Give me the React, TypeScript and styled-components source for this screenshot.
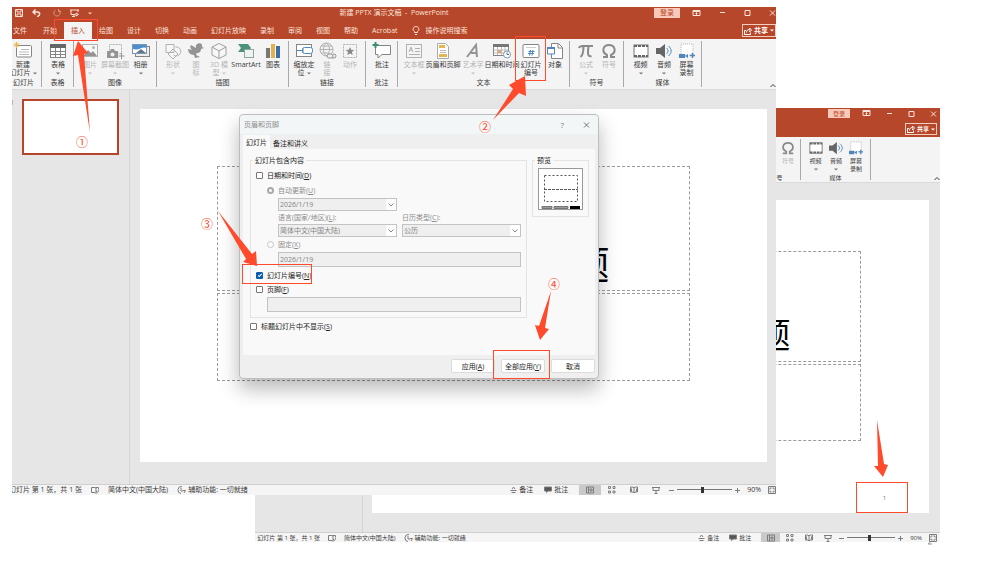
import React, { ReactNode } from "react";
import styled, { createGlobalStyle, css, ThemeProvider } from "styled-components";

/* ---------- theme ---------- */

const colors = {
  brand: "#b7472a",
  brandText: "#fbe3da",
  ribbon: "#f4f4f4",
  desk: "#e6e6e6",
  line: "#c8c8c8",
  ink: "#3a3a3a",
  faint: "#b4b4b4",
  mark: "#ff4a2c",
};

const regular = {
  font: 7, bar: 12, tabs: 20, ribbon: 51, icon: 16, line: 8, labelRow: 9,
  pane: 118, padTop: 19, padRight: 9, padBottom: 22, padLeft: 10,
  status: 11, title: 39, controls: 18, share: 13, signIn: 26, slider: 55, active: 22, gap: 11,
  edge: 0, count: 70, statusGap: 9,
};

const compact = {
  font: 6, bar: 11, tabs: 18, ribbon: 46, icon: 14, line: 8, labelRow: 11,
  pane: 108, padTop: 17, padRight: 11, padBottom: 19, padLeft: 9,
  status: 10, title: 35, controls: 15, share: 12, signIn: 22, slider: 48, active: 19, gap: 10,
  edge: 3, count: 65, statusGap: 8,
};

type Sizes = typeof regular;
type T = { theme: any };
const s = (key: keyof Sizes) => ({ theme }: T) => `${theme[key]}px`;

const GlobalStyle = createGlobalStyle`
  *, *::before, *::after { box-sizing: border-box; }
  body { margin: 0; background: #fff; }
  body, button, input, select {
    font-family: "Open Sans", "Noto Sans CJK SC", sans-serif;
  }
  button, fieldset, legend { margin: 0; padding: 0; border: 0; background: none; color: inherit; }
  svg { display: block; flex: none; }
`;

/* ---------- window frame ---------- */

const Stage = styled.main`
  display: grid;
  align-items: start;
  padding-bottom: 21px;
`;

const Window = styled.section<{ $back?: boolean }>`
  grid-area: 1 / 1;
  position: relative;
  isolation: isolate;
  overflow: hidden;
  min-width: 0;
  margin: ${(p) => (p.$back ? "108px 63px 0 255px" : "7px 227px 0 12px")};
  font-size: ${s("font")};
  line-height: ${s("line")};
  color: ${colors.ink};
  white-space: nowrap;
`;

const ResizeCorner = styled.svg`
  grid-area: 1 / 1;
  place-self: end;
  margin: 0 70px -3px 0;
`;

const Header = styled.header`
  background: ${colors.brand};
  color: ${colors.brandText};
`;

const TitleBar = styled.div`
  display: grid;
  grid-template-columns: 1fr auto 1fr;
  align-items: center;
  height: ${s("bar")};
`;

const QuickAccess = styled.div`
  display: flex;
  align-items: center;
  gap: 9px;
  padding-left: 3px;
`;

const BareButton = styled.button<{ $dim?: boolean }>`
  display: flex;
  align-items: center;
  opacity: ${(p) => (p.$dim ? 0.5 : 1)};
`;

const WindowControls = styled.div`
  display: flex;
  align-items: center;
  justify-content: flex-end;
  gap: 12px;
  grid-column: 3;
  padding-right: ${s("edge")};
`;

const FrameButtons = styled.div`
  display: flex;
  align-items: center;
  gap: ${s("controls")};
`;

const SignIn = styled.button`
  width: ${s("signIn")};
  height: ${s("bar")};
  border-top: 1px solid ${colors.brand};
  border-bottom: 1px solid ${colors.brand};
  background: #f8c9b9;
  color: ${colors.brand};
  font-size: ${s("font")};
  line-height: ${s("line")};
`;

const TabRow = styled.nav`
  display: flex;
  align-items: flex-end;
  height: ${s("tabs")};
`;

const TabButton = styled.button<{ $active?: boolean; $first?: boolean }>`
  display: flex;
  align-items: center;
  gap: 6px;
  height: 17px;
  padding: 0 ${(p) => (p.$first ? 9 : 7)}px 0 ${(p) => (p.$first ? 1 : 7)}px;
  font-size: ${s("font")};
  line-height: ${s("line")};
  ${(p) => p.$active && css`
    background: ${colors.ribbon};
    color: ${colors.brand};
  `}
`;

const Share = styled.button`
  display: flex;
  align-items: center;
  gap: 2px;
  height: ${s("share")};
  margin: 0 ${s("edge")} 2px auto;
  padding: 0 1px;
  border: 1px solid #f3cdc0;
  color: #fff;
  font-size: ${s("font")};
  line-height: ${s("line")};
  font-weight: 600;
`;

/* ---------- ribbon ---------- */

const RibbonBar = styled.div<{ $end?: boolean }>`
  position: relative;
  display: flex;
  justify-content: ${(p) => (p.$end ? "flex-end" : "flex-start")};
  height: ${s("ribbon")};
  padding: 2px ${(p) => (p.$end ? 69 : 0)}px 2px 0;
  background: ${colors.ribbon};
  border-bottom: 1px solid #dadada;
`;

const Group = styled.div<{ $width: number; $flush?: boolean }>`
  display: flex;
  flex: none;
  flex-direction: column;
  justify-content: space-between;
  width: ${(p) => p.$width}px;
  padding: 0 ${(p) => (p.$flush ? "6px 0 0" : "3px")};
  border-right: 1px solid #a9a9a9;
`;

const Tools = styled.div`
  display: flex;
  padding-top: 2px;
`;

const Tool = styled.button<{ $width: number; $off?: boolean }>`
  display: flex;
  flex: none;
  flex-direction: column;
  align-items: center;
  width: ${(p) => p.$width}px;
  color: ${(p) => (p.$off ? colors.faint : colors.ink)};
  font-size: ${s("font")};
  line-height: ${s("line")};
`;

const ToolIcon = styled.span<{ $off?: boolean }>`
  display: block;
  margin-bottom: 2px;
  opacity: ${(p) => (p.$off ? 0.6 : 1)};
  svg { width: ${s("icon")}; height: ${s("icon")}; overflow: visible; }
`;

const ToolLine = styled.span`
  display: flex;
  align-items: center;
  gap: 2px;
  min-height: ${s("line")};
`;

const GroupLabel = styled.div`
  height: ${s("labelRow")};
  line-height: ${s("labelRow")};
  display: flex;
  justify-content: center;
`;

const CollapseCaret = styled.button`
  position: absolute;
  right: 0;
  bottom: 1px;
`;

/* ---------- work area ---------- */

const WorkArea = styled.div`
  display: grid;
  grid-template-columns: ${({ theme }: T) => theme.pane}px minmax(0, 1fr);
  background: ${colors.desk};
`;

const ThumbPane = styled.aside`
  display: flex;
  align-items: flex-start;
  gap: 8px;
  padding: 9px 10px 0 0;
  border-right: 1px solid #d4d4d4;
  color: ${colors.brand};
`;

const ThumbNumber = styled.span`
  width: 2px;
  direction: rtl;
`;

const Thumb = styled.div`
  flex: 1;
  aspect-ratio: 97 / 56;
  border: 2px solid #b5452b;
  background: #fff;
`;

const Canvas = styled.div`
  padding: ${({ theme }: T) =>
    `${theme.padTop}px ${theme.padRight}px ${theme.padBottom}px ${theme.padLeft}px`};
`;

const Slide = styled.article`
  position: relative;
  display: grid;
  grid-template-columns: 77fr minmax(0, 473fr) 77fr;
  grid-template-rows: 57fr minmax(0, 125fr) 2fr 87fr minmax(0, 81fr);
  aspect-ratio: 16 / 9;
  background: #fff;
`;

const Placeholder = styled.div<{ $row: number }>`
  grid-column: 2;
  grid-row: ${(p) => p.$row};
  display: flex;
  align-items: flex-end;
  justify-content: center;
  min-width: 0;
  padding-bottom: 5px;
  border: 1px dashed #9b9b9b;
  color: #000;
  font-family: "Noto Sans CJK SC", sans-serif;
  font-size: ${s("title")};
  line-height: 46px;
`;

const SlideNumber = styled.div`
  position: relative;
  grid-column: 1 / -1;
  grid-row: 5;
  place-self: end;
  display: grid;
  place-items: center;
  width: 52px;
  height: 31px;
  margin-right: 21px;
  padding-left: 5px;
  border: 1px solid ${colors.mark};
  color: #777;
  font-size: 6px;
`;

const NumberArrow = styled.svg`
  position: absolute;
  left: 17px;
  bottom: 35px;
`;

/* ---------- status bar ---------- */

const Status = styled.footer`
  display: flex;
  align-items: center;
  gap: ${s("statusGap")};
  height: ${s("status")};
  padding-right: ${s("edge")};
  border-top: 1px solid #cfcfcf;
  background: #f5f5f5;
  svg { color: #7c7c7c; }
`;

const SlideCount = styled.span`
  display: flex;
  justify-content: flex-end;
  width: ${s("count")};
`;

const StatusButton = styled.button`
  display: flex;
  align-items: center;
  gap: 2px;
  font-size: ${s("font")};
  line-height: ${s("line")};
`;

const StatusRight = styled.div`
  display: flex;
  align-items: center;
  gap: ${s("gap")};
  height: 100%;
  margin-left: auto;
`;

const ViewAndZoom = styled.div`
  display: flex;
  align-items: center;
  gap: 2px;
  height: 100%;
`;

const ViewButtons = styled.div`
  display: flex;
  height: 100%;
`;

const ViewButton = styled.button<{ $active?: boolean }>`
  display: grid;
  place-items: center;
  width: ${s("active")};
  background: ${(p) => (p.$active ? "#c9c9c9" : "transparent")};
`;

const ZoomBox = styled.div`
  display: flex;
  align-items: center;
  gap: 3px;
`;

const ZoomSlider = styled.input`
  appearance: none;
  width: ${s("slider")};
  height: 7px;
  margin: 0;
  background: linear-gradient(#777, #777) center / 100% 1px no-repeat;
  &::-webkit-slider-thumb {
    appearance: none;
    width: 3px;
    height: 6px;
    background: #333;
  }
`;

const ZoomValue = styled.span`
  margin: 0 4px;
`;

/* ---------- dialog ---------- */

const DialogBox = styled.div`
  position: absolute;
  z-index: 2;
  top: 5px;
  left: 99px;
  width: 360px;
  border: 1px solid #bdbdbd;
  border-radius: 4px;
  background: #efefef;
  box-shadow: 0 10px 20px rgba(0, 0, 0, 0.28);
  color: #222;
  font-size: 7px;
  line-height: 9px;
`;

const DialogTitle = styled.div`
  display: flex;
  align-items: center;
  height: 19px;
  padding: 0 8px 0 4px;
  border-radius: 4px 4px 0 0;
  background: #f3f6f7;
  color: #8b8b8b;
`;

const DialogTitleButtons = styled.div`
  display: flex;
  align-items: center;
  gap: 19px;
  margin-left: auto;
  button { font-size: 8px; color: #777; }
`;

const DialogTabs = styled.div`
  display: flex;
  align-items: flex-end;
  height: 15px;
  padding: 0 3px;
`;

const DialogTab = styled.button<{ $active?: boolean }>`
  height: ${(p) => (p.$active ? 14 : 12)}px;
  padding: 0 3px;
  background: ${(p) => (p.$active ? "#f9f9f9" : "transparent")};
  font-size: 7px;
  line-height: 9px;
`;

const DialogPage = styled.div`
  margin: 0 3px;
  padding: 7px 6px 22px 7px;
  background: #f9f9f9;
`;

const Columns = styled.div`
  display: grid;
  grid-template-columns: minmax(0, 1fr) 57px;
  align-items: start;
  gap: 5px;
  margin-bottom: 1px;
`;

const Fieldset = styled.fieldset`
  min-width: 0;
  padding: 3px 5px 4px;
  border: 1px solid #e4e4e4;
`;

const Legend = styled.legend`
  margin-left: -3px;
  padding: 0 2px;
`;

const Option = styled.label<{ $indent?: boolean; $off?: boolean }>`
  display: flex;
  align-items: center;
  gap: 4px;
  height: 14px;
  margin-left: ${(p) => (p.$indent ? 11 : 0)}px;
  color: ${(p) => (p.$off ? "#8c8c8c" : "#222")};
`;

const Check = styled.input`
  appearance: none;
  display: grid;
  place-items: center;
  width: 7px;
  height: 7px;
  margin: 0;
  border: 1px solid #777;
  border-radius: ${(p) => (p.type === "radio" ? "50%" : "1px")};
  background: #fdfdfd;
  &[type="radio"] { border-color: #c4c4c4; }
  &[type="radio"]:checked { border: 2px solid #a9a9a9; }
  &[type="checkbox"]:checked {
    border-color: #0a5cad;
    background: #0a5cad;
  }
  &[type="checkbox"]:checked::after {
    content: "";
    width: 4px;
    height: 2px;
    border: solid #fff;
    border-width: 0 0 1px 1px;
    transform: rotate(-45deg);
  }
`;

const DateGrid = styled.div`
  display: grid;
  grid-template-columns: 1fr 1fr;
  column-gap: 5px;
  margin: 1px 0 0 22px;
  color: #8c8c8c;
`;

const Combo = styled.div`
  position: relative;
  svg { position: absolute; right: 3px; top: 5px; pointer-events: none; }
`;

const fieldLook = css`
  display: block;
  width: 100%;
  height: 13px;
  margin: 0;
  padding: 0 1px;
  border: 1px solid #c3c3c3;
  border-radius: 0;
  color: #858585;
  font-size: 7px;
  line-height: 11px;
  opacity: 1;
`;

const Select = styled.select`
  appearance: none;
  ${fieldLook}
  background: linear-gradient(#fdfdfd, #fdfdfd) right / 10px 100% no-repeat #efefef;
`;

const FieldLabel = styled.label`
  height: 13px;
  line-height: 13px;
`;

const TextField = styled.input`
  ${fieldLook}
  height: 15px;
  background: #efefef;
`;

const Indent = styled.div<{ $by: number }>`
  margin: 1px 0 1px ${(p) => p.$by}px;
`;

const Preview = styled.div`
  display: grid;
  place-items: center;
  padding-bottom: 2px;
`;

const DialogFooter = styled.div`
  display: flex;
  justify-content: flex-end;
  gap: 6px;
  padding: 4px 3px 5px;
`;

const PushButton = styled.button`
  width: 44px;
  height: 14px;
  border: 1px solid #dcdcdc;
  border-radius: 2px;
  background: #fff;
  font-size: 7px;
  line-height: 9px;
`;

/* ---------- annotations ---------- */

const MarkLayer = styled.svg`
  position: absolute;
  z-index: 5;
  top: 0;
  left: 0;
  pointer-events: none;
`;

const StepNumber = styled.span<{ $x: number; $y: number }>`
  position: absolute;
  z-index: 5;
  left: ${(p) => p.$x - 6}px;
  top: ${(p) => p.$y - 6}px;
  width: 12px;
  color: ${colors.mark};
  font-family: "Noto Sans CJK SC", sans-serif;
  font-size: 12px;
  line-height: 12px;
`;

/* ---------- icons ---------- */

const G = "#858585";
const B = "#4f86bd";

const art: Record<string, ReactNode> = {
  newSlide: <><rect x="1.500" y="2.500" width="15" height="11.500" rx="1" fill="#fff" stroke={G} /><path d="M6 6.500h8M4 9h10M4 11.500h10" stroke="#bbb" /><path d="M1.500-1v6M-1.500 2h6M-.5 0l4 4M3.500 0l-4 4" stroke="#eeb24a" /></>,
  table: <><rect x=".5" y="1.500" width="15" height="13" fill="#fff" stroke={G} /><path d="M0 1h16v4H0z" fill="#666" /><path d="M0 8.500h16M0 11.500h16M5.500 5v10M10.500 5v10" stroke={G} /></>,
  picture: <><rect x=".5" y="1.500" width="15" height="12" fill="#fafafa" stroke={G} /><path d="m1 13 5-6 3 3 2-2 4 5z" fill="#555" /><circle cx="11.500" cy="4.500" r="1.500" fill="#888" /></>,
  screenshot: <><rect x="2.500" y="1.500" width="12" height="9" fill="none" stroke={G} strokeDasharray="2 1" /><path d="M0 8h3l1-2h3l1 2h3v7H0z" fill="#555" /><circle cx="5.500" cy="11.500" r="2" fill="#eee" /><path d="M14.500 10v6M11.500 13h6" stroke="#555" /></>,
  album: <><rect x="2.500" y="3.500" width="14" height="10" fill="#eee" stroke={G} /><rect x="-.5" y="1.500" width="14" height="9" fill="#fff" stroke="#7a98b3" /><path d="M0 2h13v3C9 3 6 8 0 6z" fill="#4b8fca" /><path d="m3 10 5-4 5 4z" fill="#678" /></>,
  shapes: <path d="M1 1.500h8v8H1zM10.500 4a4.500 4.500 0 1 1-2 8M8 6l5 5-5 5-5-5z" fill="#fafafa" stroke={G} />,
  icons: <path d="M8 2c3-3 7-2 6 2l2 1-3 1c0 3-2 4-4 4l-1 2 4 2-5 1-1-3C2 12 0 9 0 6l4 1C2 5 2 3 3 2l5 3z" fill="#555" />,
  model: <path d="M8 .5 15 4v8l-7 3.500L1 12V4zM1 4l7 4 7-4M8 8v7.500" fill="#fafafa" stroke="#666" />,
  smartart: <><path d="M0 1h10l3 4-3 4H0l3-4z" fill="#4d927d" /><rect x="6.500" y="6.500" width="9" height="8" fill="#eef2f0" stroke="#8fa69d" /></>,
  chart: <><path d="M1 5h4v10H1z" fill="#777" /><path d="M6 1h4v14H6z" fill="#e3b04e" /><path d="M11 3h4v12h-4z" fill="#3b6ea8" /></>,
  zoomLink: <><rect x=".5" y="1.500" width="15" height="12" fill="#fff" stroke={G} /><rect x="6.500" y="4.500" width="10" height="6" rx="2" fill="#fff" stroke={B} /><path d="M1 7.500h6M7 5.500v4" stroke={B} /></>,
  link: <><path d="M7.500 0a6.500 6.500 0 1 1 0 13 6.500 6.500 0 0 1 0-13M1 6.500h13M7.500 0c-4 4-4 9 0 13M7.500 0c4 4 4 9 0 13M2 3h11M2 10h8" fill="none" stroke={G} /><path d="M10 11h2a2 2 0 0 1 0 4h-2a2 2 0 0 1 0-4M14 11h1a2 2 0 0 1 0 4h-2" fill="#eee" stroke="#555" /></>,
  action: <><rect x="1.500" y="1.500" width="13" height="13" fill="none" stroke={G} strokeDasharray="2 1" /><path d="m8 4 1.200 2.800 3 .2-2.300 2 .8 3L8 10.400 5.300 12l.8-3-2.300-2 3-.2z" fill="#444" /></>,
  comment: <><path d="M1.500 2.500h15v9H8l-4 3.500v-3.500H1.500z" fill="#fff" stroke={G} /><path d="M1.500-1v6M-1.500 2h6" stroke="#3c8f6d" strokeWidth="2" /></>,
  textbox: <><rect x=".5" y="1.500" width="15" height="13" fill="#f4f4f4" stroke={G} /><path d="m3 9 2-5 2 5M4 7h2M9 5.500h5M9 8.500h5M3 11.500h11" fill="none" stroke={G} /></>,
  headerFooter: <><path d="M2.500.5h8l3 3v12h-11z" fill="#fff" stroke="#aaa" /><path d="M4 2h6v3H4zM4 11h8v3H4z" fill="#e6b64f" /><path d="M5 7.500h6M5 9.500h6" stroke="#bbb" /></>,
  wordart: <path d="M2 14 11 2l1 12M6 10h6" fill="none" stroke="#555" strokeWidth="2" />,
  datetime: <><rect x="-.5" y="1.500" width="15" height="11" fill="#fff" stroke={G} /><path d="M-1 1h16v3H-1z" fill="#777" /><path d="M0 7h14M0 10h14M3.500 4v8M7.500 4v8M11 4v8" stroke="#bbb" /><path d="M4 7h3v3H4z" fill="#e8a36c" /><circle cx="13" cy="11.500" r="3.500" fill="#fff" stroke="#7d9bb8" /><path d="M13 9.500v2h2" fill="none" stroke="#666" /></>,
  slideNumber: <><rect x="0" y="1.500" width="16" height="13" rx="1" fill="#fff" stroke={G} /><path d="M3 4.500h10" stroke="#ccc" /><path d="M7.500 7 6.500 12.500M10 7 9 12.500M5.500 8.500h6M5 10.500h6" stroke={B} /></>,
  object: <><path d="M4.500.5h7l4 4v11h-11z" fill="#fff" stroke={G} /><path d="M11 1v4h4" fill="none" stroke={G} /><path d="M.5 5h7v6h-7z" fill="#fff" stroke={B} /><path d="M0 4h8v2H0z" fill={B} /></>,
  equation: <path d="M1 5c1-3 3-2 6-2h8M5.500 3.500C5.500 9 5 12 2.500 14M10.500 3.500c-1 6-1 11 3 9.500" fill="none" stroke="#444" strokeWidth="2" />,
  symbol: <path d="M2 14h4v-2C0 9 2 2 8 2s8 7 2 10v2h4" fill="none" stroke="#444" strokeWidth="2" />,
  video: <><rect x="1" y="2" width="14" height="12" fill="#fff" stroke="#777" /><path d="M1 3h14M1 13h14" stroke="#666" strokeWidth="2" strokeDasharray="3 1" /></>,
  audio: <><path d="M0 5h4l5-4v14l-5-4H0z" fill="#666" /><path d="M10.500 5c2 2 2 4 0 6M12.500 3c3.500 3 3.500 7 0 10" fill="none" stroke={B} /></>,
  record: <><rect x="2" y="1" width="12" height="11" fill="#fff" stroke="#b5b5b5" strokeDasharray="1 1" /><path d="M0 11h6v4H0zM6 13l3-2v4z" fill={B} /><path d="M13.500 10v5M11 12.500h5" stroke={B} strokeWidth="1.500" /></>,
};

const Art = ({ name }: { name: string }) => (
  <svg viewBox="0 0 16 16" aria-hidden="true">{art[name]}</svg>
);

const Caret = ({ color = "#777" }: { color?: string }) => (
  <svg width="4" height="3" viewBox="0 0 4 3" aria-hidden="true"><path d="M0 .5h4L2 2.500z" fill={color} /></svg>
);

const Chevron = () => (
  <svg width="6" height="4" viewBox="0 0 6 4" aria-hidden="true"><path d="m.5.5 2.500 2.500L5.500.5" fill="none" stroke="#888" /></svg>
);

const Line = ({ d, w = 8, h = 8, fill = "none", stroke = 1 }: { d: string; w?: number; h?: number; fill?: string; stroke?: number }) => (
  <svg width={w} height={h} viewBox={`0 0 ${w} ${h}`} fill={fill} stroke="currentColor" strokeWidth={stroke} aria-hidden="true"><path d={d} /></svg>
);

/* ---------- data ---------- */

type ToolSpec = { icon: string; lines: string[]; width: number; off?: boolean; caret?: number };
type GroupSpec = { label: string; width: number; flush?: boolean; tools: ToolSpec[] };

const groups: GroupSpec[] = [
  { label: "幻灯片", width: 30, flush: true, tools: [{ icon: "newSlide", lines: ["新建", "幻灯片"], width: 22, caret: 1 }] },
  { label: "表格", width: 32, tools: [{ icon: "table", lines: ["表格", ""], width: 26, caret: 1 }] },
  { label: "图像", width: 83, tools: [
    { icon: "picture", lines: ["图片", ""], width: 26, off: true, caret: 1 },
    { icon: "screenshot", lines: ["屏幕截图", ""], width: 24, off: true, caret: 1 },
    { icon: "album", lines: ["相册", ""], width: 27, caret: 1 },
  ] },
  { label: "插图", width: 132, tools: [
    { icon: "shapes", lines: ["形状", ""], width: 26, off: true, caret: 1 },
    { icon: "icons", lines: ["图", "标"], width: 20, off: true },
    { icon: "model", lines: ["3D 模", "型"], width: 26, off: true, caret: 1 },
    { icon: "smartart", lines: ["SmartArt"], width: 28 },
    { icon: "chart", lines: ["图表"], width: 26 },
  ] },
  { label: "链接", width: 77, tools: [
    { icon: "zoomLink", lines: ["缩放定", "位"], width: 24, caret: 1 },
    { icon: "link", lines: ["链", "接"], width: 22, off: true },
    { icon: "action", lines: ["动作"], width: 24, off: true },
  ] },
  { label: "批注", width: 32, tools: [{ icon: "comment", lines: ["批注"], width: 26 }] },
  { label: "文本", width: 172, tools: [
    { icon: "textbox", lines: ["文本框", ""], width: 26, off: true, caret: 1 },
    { icon: "headerFooter", lines: ["页眉和页脚"], width: 32 },
    { icon: "wordart", lines: ["艺术字", ""], width: 28, off: true, caret: 1 },
    { icon: "datetime", lines: ["日期和时间"], width: 30 },
    { icon: "slideNumber", lines: ["幻灯片", "编号"], width: 28 },
    { icon: "object", lines: ["对象"], width: 20 },
  ] },
  { label: "符号", width: 54, tools: [
    { icon: "equation", lines: ["公式", ""], width: 26, off: true, caret: 1 },
    { icon: "symbol", lines: ["符号"], width: 20, off: true },
  ] },
  { label: "媒体", width: 78, tools: [
    { icon: "video", lines: ["视频", ""], width: 27, caret: 1 },
    { icon: "audio", lines: ["音频", ""], width: 20, caret: 1 },
    { icon: "record", lines: ["屏幕", "录制"], width: 25 },
  ] },
];

const narrowGroups: GroupSpec[] = [
  { label: "符号", width: 48, tools: [
    { icon: "equation", lines: ["公式", ""], width: 24, off: true, caret: 1 },
    { icon: "symbol", lines: ["符号"], width: 16, off: true },
  ] },
  { label: "媒体", width: 70, tools: [
    { icon: "video", lines: ["视频", ""], width: 23, caret: 1 },
    { icon: "audio", lines: ["音频", ""], width: 18, caret: 1 },
    { icon: "record", lines: ["屏幕", "录制"], width: 22 },
  ] },
];

const tabs = ["文件", "开始", "插入", "绘图", "设计", "切换", "动画", "幻灯片放映", "录制", "审阅", "视图", "帮助", "Acrobat"];

/* ---------- parts ---------- */

const Controls = () => (
  <WindowControls>
    <SignIn>登录</SignIn>
    <FrameButtons>
      <BareButton aria-label="功能区显示选项"><Line w={9} h={7} d="M1 .5h7v5H1zM1 1.500h7M4.500 5V3M3.500 3.500l1-1 1 1" /></BareButton>
      <BareButton aria-label="最小化"><Line w={7} d="M1 3.500h5" /></BareButton>
      <BareButton aria-label="最大化"><Line w={7} d="M1 1.500h5v5H1z" /></BareButton>
      <BareButton aria-label="关闭"><Line w={7} d="m1 1.500 5 5M6 1.500l-5 5" /></BareButton>
    </FrameButtons>
  </WindowControls>
);

const ShareButton = () => (
  <Share>
    <Line d="M2 3.500H.5v4h6v-2M2.500 5.500c0-2 1-3 3-3V1l2 2-2 2V3.500" />
    共享
    <Caret color="#fff" />
  </Share>
);

const Ribbon = ({ items, end }: { items: GroupSpec[]; end?: boolean }) => (
  <RibbonBar $end={end}>
    {items.map((g) => (
      <Group key={g.label} $width={g.width} $flush={g.flush}>
        <Tools>
          {g.tools.map((t) => (
            <Tool key={t.icon} $width={t.width} $off={t.off}>
              <ToolIcon $off={t.off}><Art name={t.icon} /></ToolIcon>
              {t.lines.map((l, i) => (
                <ToolLine key={i}>{l}{t.caret === i && <Caret color={t.off ? "#c4c4c4" : "#777"} />}</ToolLine>
              ))}
            </Tool>
          ))}
        </Tools>
        <GroupLabel>{g.label}</GroupLabel>
      </Group>
    ))}
    <CollapseCaret aria-label="折叠功能区"><Line w={6} h={5} d="m.5 4 2.500-2.500L5.500 4" /></CollapseCaret>
  </RibbonBar>
);

const StatusBar = ({ name }: { name: string }) => (
  <Status>
    <SlideCount>幻灯片 第 1 张，共 1 张</SlideCount>
    <Line d="M4 1.500H.5v5H4l1 1V2zM5 1.500h2.500v2M5 5l1.500 1.500L8 4" />
    <span>简体中文(中国大陆)</span>
    <StatusButton>
      <Line w={9} d="M5 .5a3.500 3.500 0 1 0-1 7M4 2v3h2M6 4.500h2.500L7 7" />
      辅助功能: 一切就绪
    </StatusButton>
    <StatusRight>
      <StatusButton><Line w={7} d="M2 3 3.500 1 5 3M.5 4.500h6M1.500 6.500h4" />备注</StatusButton>
      <StatusButton><Line fill="#555" d="M.5 1h7v4H4L2.500 6.500V5h-2z" />批注</StatusButton>
      <ViewAndZoom>
        <ViewButtons>
          <ViewButton $active aria-label="普通视图"><Line d="M.5 1h7v6h-7zM2.500 1v6M4 3h2v2H4z" /></ViewButton>
          <ViewButton aria-label="幻灯片浏览"><Line d="M.5.5h2v2h-2zM5 .5h2v2H5zM.5 5h2v2h-2zM5 5h2v2H5z" /></ViewButton>
          <ViewButton aria-label="阅读视图"><Line d="M.5 1H3l1 1 1-1h2.500v5H5L4 7 3 6H.5zM4 2v5M1.500 2.500v3M6.500 2.500v3" /></ViewButton>
          <ViewButton aria-label="幻灯片放映"><Line d="M0 1.500h8M1 1.500v3h6v-3M4 4.500v3M2.500 7.500h3" /></ViewButton>
        </ViewButtons>
        <ZoomBox>
          <BareButton aria-label="缩小"><Line w={5} d="M0 4.500h5" /></BareButton>
          <ZoomSlider type="range" aria-label={name} min="10" max="170" defaultValue="84" />
          <BareButton aria-label="放大"><Line w={5} d="M0 4.500h5M2.500 2v5" /></BareButton>
          <ZoomValue>90%</ZoomValue>
          <BareButton aria-label="适应窗口"><Line d="M.5.5h7v7h-7zM2 3.500V2h1.500M6 3.500V2H4.500M2 4.500V6h1.500M6 4.500V6H4.500" /></BareButton>
        </ZoomBox>
      </ViewAndZoom>
    </StatusRight>
  </Status>
);

const DateOptions = () => (
  <>
    <Indent $by={0}>
      <Option $indent $off><Check type="radio" name="date" defaultChecked disabled /><span>自动更新(<u>U</u>)</span></Option>
    </Indent>
    <DateGrid>
      <Combo><Select aria-label="日期格式" disabled><option>2026/1/19</option></Select><Chevron /></Combo>
      <span />
      <FieldLabel htmlFor="lang">语言(国家/地区)(<u>L</u>):</FieldLabel>
      <FieldLabel htmlFor="calendar">日历类型(<u>C</u>):</FieldLabel>
      <Combo><Select id="lang" disabled><option>简体中文(中国大陆)</option></Select><Chevron /></Combo>
      <Combo><Select id="calendar" disabled><option>公历</option></Select><Chevron /></Combo>
    </DateGrid>
    <Option $indent $off><Check type="radio" name="date" disabled /><span>固定(<u>X</u>)</span></Option>
    <Indent $by={22}><TextField aria-label="固定日期" defaultValue="2026/1/19" disabled /></Indent>
  </>
);

const HeaderFooterDialog = () => (
  <DialogBox role="dialog" aria-label="页眉和页脚">
    <DialogTitle>
      页眉和页脚
      <DialogTitleButtons>
        <button aria-label="帮助">?</button>
        <BareButton aria-label="关闭"><Line w={7} d="m1 1.500 5 5M6 1.500l-5 5" /></BareButton>
      </DialogTitleButtons>
    </DialogTitle>
    <DialogTabs>
      <DialogTab $active>幻灯片</DialogTab>
      <DialogTab>备注和讲义</DialogTab>
    </DialogTabs>
    <DialogPage>
      <Columns>
        <Fieldset>
          <Legend>幻灯片包含内容</Legend>
          <Option><Check type="checkbox" /><span>日期和时间(<u>D</u>)</span></Option>
          <DateOptions />
          <Option><Check type="checkbox" defaultChecked /><span>幻灯片编号(<u>N</u>)</span></Option>
          <Option><Check type="checkbox" /><span>页脚(<u>F</u>)</span></Option>
          <Indent $by={11}><TextField aria-label="页脚" disabled /></Indent>
        </Fieldset>
        <Fieldset>
          <Legend>预览</Legend>
          <Preview>
            <svg width="45" height="42" viewBox="0 0 45 42" aria-hidden="true">
              <rect x=".5" y=".5" width="44" height="41" fill="#fff" stroke="#999" />
              <path d="M6.500 7.500h33v26h-33z" fill="none" stroke="#555" strokeDasharray="2 2" />
              <path d="M6 21.500h34" stroke="#555" strokeDasharray="3 1" />
              <path d="M4 38.500h10v2H4zM16 38.500h14v2H16z" fill="#999" stroke="#777" />
              <path d="M32 38h10v3H32z" fill="#000" />
            </svg>
          </Preview>
        </Fieldset>
      </Columns>
      <Option><Check type="checkbox" /><span>标题幻灯片中不显示(<u>S</u>)</span></Option>
    </DialogPage>
    <DialogFooter>
      <PushButton>应用(<u>A</u>)</PushButton>
      <PushButton>全部应用(<u>Y</u>)</PushButton>
      <PushButton>取消</PushButton>
    </DialogFooter>
  </DialogBox>
);

const Marks = () => (
  <>
    <MarkLayer width="600" height="400" viewBox="12 7 600 400" aria-hidden="true">
      <g fill="none" stroke={colors.mark}>
        <rect x="54.500" y="19.500" width="43" height="21" />
        <rect x="515.500" y="36.500" width="30" height="44" />
        <rect x="242.500" y="264.500" width="69" height="19" />
        <rect x="493.500" y="350.500" width="56" height="28" />
      </g>
      <g fill={colors.mark}>
        <path d="M78 41 73 56l5-1 12 78-6-79 4-1z" />
        <path d="m525 76-16 9 4 4-20 31 26-27 7 3z" />
        <path d="m257 266-1-15-4 3-34-43 28 48-3 3z" />
        <path d="m540 340 9-11-4-1 6-37-12 35-4-1z" />
      </g>
    </MarkLayer>
    <StepNumber $x={70} $y={135}>①</StepNumber>
    <StepNumber $x={473} $y={120}>②</StepNumber>
    <StepNumber $x={195} $y={217}>③</StepNumber>
    <StepNumber $x={542} $y={277}>④</StepNumber>
  </>
);

/* ---------- windows ---------- */

const ResultWindow = () => (
  <ThemeProvider theme={compact}>
    <Window $back>
      <Header>
        <TitleBar><Controls /></TitleBar>
        <TabRow><ShareButton /></TabRow>
      </Header>
      <Ribbon items={narrowGroups} end />
      <WorkArea>
        <ThumbPane />
        <Canvas>
          <Slide>
            <Placeholder $row={2}>单击此处添加标题</Placeholder>
            <Placeholder $row={4} />
            <SlideNumber>
              1
              <NumberArrow width="14" height="57" viewBox="0 0 14 57" aria-hidden="true">
                <path d="M3 0 4 46 0 46l9 11 5-12-4-1z" fill={colors.mark} />
              </NumberArrow>
            </SlideNumber>
          </Slide>
        </Canvas>
      </WorkArea>
      <StatusBar name="结果窗口缩放" />
    </Window>
  </ThemeProvider>
);

const EditorWindow = () => (
  <ThemeProvider theme={regular}>
    <Window>
      <Header>
        <TitleBar>
          <QuickAccess>
            <BareButton aria-label="保存"><Line d="M.5.5h7v7h-7zM2 .5v2.500h4V.5M2 7.500V5h4v2.500" /></BareButton>
            <BareButton aria-label="撤消"><Line w={12} stroke={1.5} d="M3.500.5 1 3l2.500 2.500M1 3h4.500c3 0 3 4-.5 4.500" /></BareButton>
            <BareButton $dim aria-label="重做"><Line d="M5.500 1a3.200 3.200 0 1 1-3 0M5.500 0v2.500H8" /></BareButton>
            <BareButton aria-label="从头开始"><Line w={9} d="M0 1h9M1 1v4.500h4M8 1v2M4 5.500v2M2 7.500h3M6 4l2.500 1.500L6 7z" /></BareButton>
            <Caret color="#f3cdc0" />
          </QuickAccess>
          <span>新建 PPTX 演示文稿 &nbsp;-&nbsp; PowerPoint</span>
          <Controls />
        </TitleBar>
        <TabRow>
          {tabs.map((t, i) => (
            <TabButton key={t} $active={t === "插入"} $first={i === 0}>{t}</TabButton>
          ))}
          <TabButton>
            <Line w={8} h={9} d="M2.500 5.500C-.5 3 2 .5 4 .5s4.500 2.500 1.500 5v1h-3zM3 8.500h2" />
            操作说明搜索
          </TabButton>
          <ShareButton />
        </TabRow>
      </Header>
      <Ribbon items={groups} />
      <WorkArea>
        <ThumbPane><ThumbNumber>1</ThumbNumber><Thumb /></ThumbPane>
        <Canvas>
          <Slide>
            <Placeholder $row={2}>单击此处添加标题</Placeholder>
            <Placeholder $row={4} />
            <HeaderFooterDialog />
          </Slide>
        </Canvas>
      </WorkArea>
      <StatusBar name="编辑窗口缩放" />
      <Marks />
    </Window>
  </ThemeProvider>
);

export default function App() {
  return (
    <>
      <GlobalStyle />
      <Stage>
        <ResultWindow />
        <EditorWindow />
        <ResizeCorner width="6" height="5" viewBox="0 0 6 5" aria-hidden="true">
          <path d="M5 .5 1 4h4" fill="none" stroke="#999" />
        </ResizeCorner>
      </Stage>
    </>
  );
}
